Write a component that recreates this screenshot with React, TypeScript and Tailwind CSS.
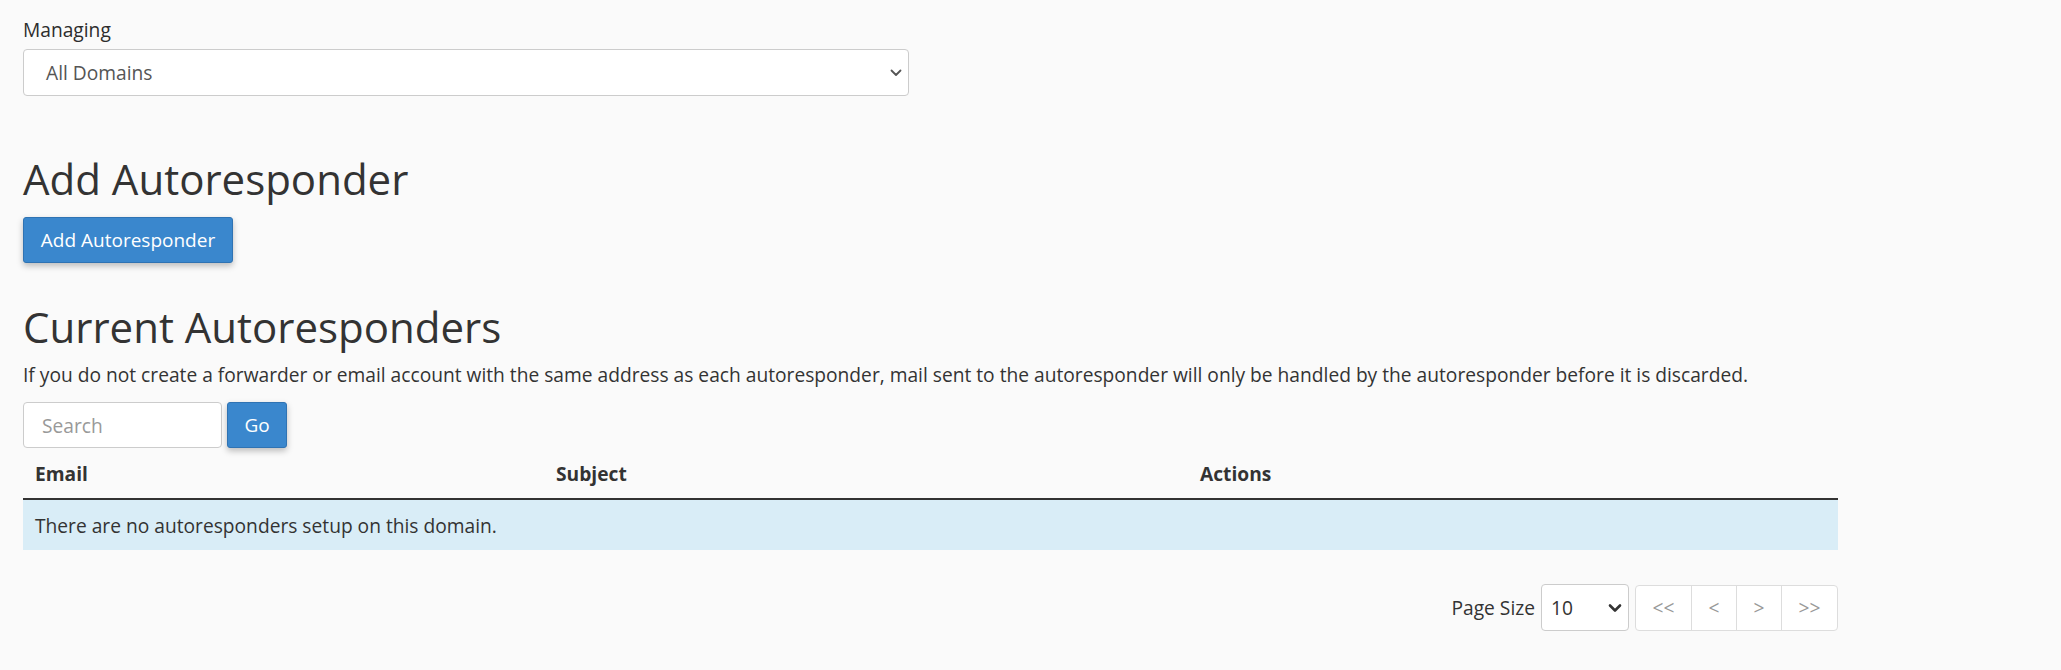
import React from "react";

function ChevronThin() {
  return (
    <svg width="14" height="10" viewBox="0 0 14 10" fill="none">
      <path d="M2.5 2.5 L7 7 L11.5 2.5" stroke="#555" strokeWidth="1.8" strokeLinecap="round" strokeLinejoin="round" />
    </svg>
  );
}

function ChevronBold() {
  return (
    <svg width="14" height="10" viewBox="0 0 14 10" fill="none">
      <path d="M2 2.5 L7 7.5 L12 2.5" stroke="#333" strokeWidth="2.6" strokeLinecap="round" strokeLinejoin="round" />
    </svg>
  );
}

export default function App() {
  return (
    <div className="min-h-[670px] w-full bg-[#fafafa] font-['Open_Sans',sans-serif] text-[#333] text-[19.2px] leading-[27px] pl-[23px] pt-[16px]">
      <div className="w-[1815px]">
        <div className="mb-[6px] font-medium text-[#2d2d2d]">Managing</div>
        <div className="w-[886px] h-[47px] bg-white border border-[#ccc] rounded-[4px] flex items-center justify-between pl-[22px] pr-[5px] text-[#555]">
          <span>All Domains</span>
          <ChevronThin />
        </div>

        <h2 className="mt-[60px] text-[42px] leading-[46px] font-normal text-[#333]">Add Autoresponder</h2>
        <button className="mt-[15px] h-[46px] w-[210px] bg-[#3a87cd] border border-[#2f73b3] rounded-[3px] text-white text-[19px] shadow-[0_3px_6px_rgba(0,0,0,0.25)] flex items-center justify-center">
          Add Autoresponder
        </button>

        <h2 className="mt-[41px] text-[42px] leading-[46px] font-normal text-[#333]">Current Autoresponders</h2>
        <p className="mt-[11px]">
          If you do not create a forwarder or email account with the same address as each autoresponder, mail sent to the autoresponder will only be handled by the autoresponder before it is discarded.
        </p>

        <div className="mt-[14px] flex gap-[5px]">
          <div className="w-[199px] h-[46px] bg-white border border-[#ccc] rounded-[4px] flex items-center pl-[18px] text-[#999]">
            Search
          </div>
          <button className="w-[60px] h-[46px] bg-[#3a87cd] border border-[#2f73b3] rounded-[3px] text-white text-[19px] shadow-[0_3px_6px_rgba(0,0,0,0.25)] flex items-center justify-center">
            Go
          </button>
        </div>

        <div className="w-[1815px]">
          <div className="flex h-[52px] items-center border-b-2 border-[#333] font-bold">
            <div className="w-[521px] pl-[12px]">Email</div>
            <div className="w-[644px] pl-[12px]">Subject</div>
            <div className="flex-1 pl-[12px]">Actions</div>
          </div>
          <div className="h-[50px] bg-[#d9edf7] flex items-center pl-[12px]">
            There are no autoresponders setup on this domain.
          </div>
        </div>

        <div className="mt-[34px] flex justify-end items-center">
          <span className="mr-[6px]">Page Size</span>
          <div className="w-[88px] h-[47px] bg-white border border-[#ccc] rounded-[4px] flex items-center justify-between pl-[9px] pr-[6px] text-[#333]">
            <span>10</span>
            <ChevronBold />
          </div>
          <div className="ml-[6px] h-[46px] flex border border-[#ddd] rounded-[4px] bg-white text-[#999]">
            <div className="w-[56px] flex items-center justify-center border-r border-[#ddd]">&lt;&lt;</div>
            <div className="w-[45px] flex items-center justify-center border-r border-[#ddd]">&lt;</div>
            <div className="w-[45px] flex items-center justify-center border-r border-[#ddd]">&gt;</div>
            <div className="w-[55px] flex items-center justify-center">&gt;&gt;</div>
          </div>
        </div>
      </div>
    </div>
  );
}
